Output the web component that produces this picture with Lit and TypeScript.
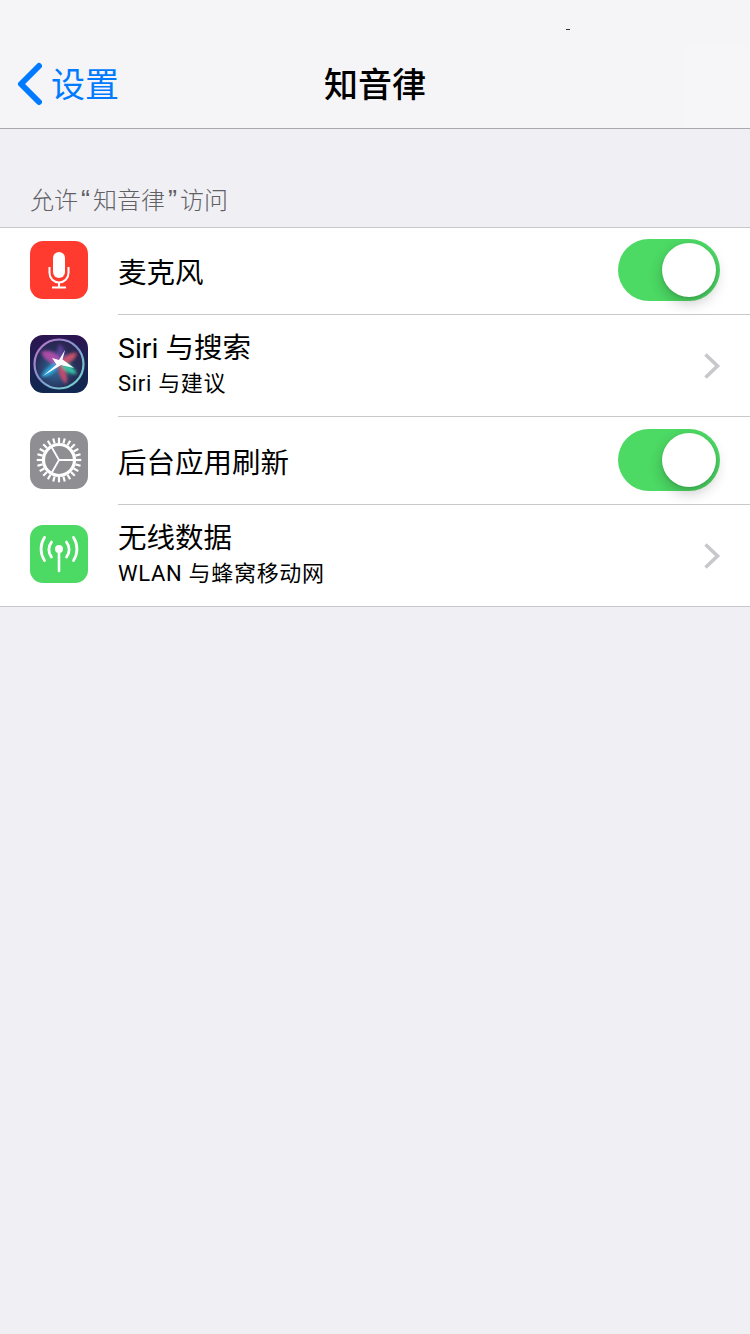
import { LitElement, html, css, svg } from "lit";
import { customElement } from "lit/decorators.js";

const micIcon = html`<svg viewBox="0 0 58 58" width="58" height="58"><rect width="58" height="58" rx="13" fill="#ff3b30"/>
<rect x="23" y="11" width="12" height="26" rx="6" fill="#fff"/>
<path d="M19.5 26v6a9.5 9.5 0 0 0 19 0v-6" fill="none" stroke="#fff" stroke-width="2"/>
<path d="M29 41.5v5M22 46.5h14" fill="none" stroke="#fff" stroke-width="2"/></svg>`;

const siriIcon = html`<svg viewBox="0 0 58 58" width="58" height="58"><defs>
<linearGradient id="sb" x1="0" y1="0" x2="0" y2="1"><stop offset="0" stop-color="#2c1450"/><stop offset=".5" stop-color="#1c2152"/><stop offset="1" stop-color="#10284f"/></linearGradient>
<radialGradient id="so" cx=".42" cy=".62" r=".62"><stop offset="0" stop-color="#2f6e9c"/><stop offset=".65" stop-color="#27305a"/><stop offset="1" stop-color="#2b2350"/></radialGradient>
<linearGradient id="sr" x1="0" y1="0" x2="1" y2="1"><stop offset="0" stop-color="#c070c8"/><stop offset=".5" stop-color="#7f9ad0"/><stop offset="1" stop-color="#70e0c8"/></linearGradient>
<filter id="bl" x="-30%" y="-30%" width="160%" height="160%"><feGaussianBlur stdDeviation="1.5"/></filter><filter id="bl2" x="-30%" y="-30%" width="160%" height="160%"><feGaussianBlur stdDeviation=".5"/></filter></defs>
<rect width="58" height="58" rx="13" fill="url(#sb)"/>
<circle cx="29" cy="29" r="24.5" fill="url(#so)" stroke="url(#sr)" stroke-width="2.2"/>
<g filter="url(#bl)">
<path d="M11 17C20 13 31 19 31 29 24 31 14 26 11 17Z" fill="#c04fb0" opacity=".85"/>
<path d="M30 9C36 15 37 22 31 28 26 23 25 15 30 9Z" fill="#8a4fd0" opacity=".5"/>
<path d="M47 18C41 17 33 21 30 28 37 31 45 26 47 18Z" fill="#e05a70" opacity=".85"/>
<path d="M29 28C35 33 39 41 36 49 30 44 27 36 29 28Z" fill="#d04a6c" opacity=".9"/>
<path d="M29 27C22 28 14 34 11 42 19 43 27 37 29 27Z" fill="#30b0e8" opacity=".85"/>
<path d="M30 27C38 27 44 32 47 39 40 40 32 35 30 27Z" fill="#34d0a8" opacity=".9"/>
</g>
<g filter="url(#bl2)" fill="#fff">
<path d="M35 15L32.5 24.5 44 33 31 30 13 41 26.5 29.5 22 23 29 25Z"/>
</g>
</svg>`;

const teeth = Array.from({ length: 24 }, (_, i) => {
  const a = (i * 15 * Math.PI) / 180;
  return svg`<line x1=${(29 + Math.cos(a) * 17).toFixed(2)} y1=${(29 + Math.sin(a) * 17).toFixed(2)} x2=${(29 + Math.cos(a) * 22.3).toFixed(2)} y2=${(29 + Math.sin(a) * 22.3).toFixed(2)} stroke="#fff" stroke-width="2.2"/>`;
});
const gearIcon = html`<svg viewBox="0 0 58 58" width="58" height="58"><rect width="58" height="58" rx="13" fill="#8e8e93"/>
${teeth}
<circle cx="29" cy="29" r="15.5" fill="none" stroke="#fff" stroke-width="3.2"/>
<path d="M29 29L45 29M29 29L21 15M29 29L21 43" fill="none" stroke="#fff" stroke-width="1.8"/></svg>`;

const wifiIcon = html`<svg viewBox="0 0 58 58" width="58" height="58"><rect width="58" height="58" rx="13" fill="#4cd964"/>
<circle cx="29" cy="24" r="4" fill="#fff"/>
<path d="M29 24V46" stroke="#fff" stroke-width="2.6" stroke-linecap="round"/>
<g fill="none" stroke="#fff" stroke-width="2.8" stroke-linecap="round">
<path d="M21.5 17a12 12 0 0 0 0 15"/><path d="M36.5 17a12 12 0 0 1 0 15"/>
<path d="M14.5 12.5a21 21 0 0 0 0 23"/><path d="M43.5 12.5a21 21 0 0 1 0 23"/></g></svg>`;

const chevron = html`<svg class="chev" viewBox="0 0 18 28" width="18" height="28"><path d="M2.5 2.5L14.5 14 2.5 25.5" fill="none" stroke="#c7c7cc" stroke-width="3.6"/></svg>`;
const toggle = html`<div class="toggle"><div class="knob"></div></div>`;

@customElement("app-root")
export class AppRoot extends LitElement {
  static styles = css`
    :host { display: block; width: 750px; height: 1334px; background: #efeff4; overflow: hidden; position: relative;
      font-family: "Roboto", "Noto Sans CJK SC", sans-serif; color: #000; }
    .nav { height: 128px; box-sizing: content-box; background: #f5f5f8; border-bottom: 1px solid #a9a9ad; display: flex; align-items: flex-end; position: relative; }
    .navin { height: 88px; flex: 1; display: grid; grid-template-columns: 1fr auto 1fr; align-items: center; }
    .back { display: flex; align-items: center; color: #007aff; font-size: 34px; gap: 7px; padding-left: 16px; }
    .back svg { display: block; }
    .back span, .title { padding-bottom: 4px; }
    .title { font-size: 34px; font-weight: 500; }
    .glare { position: absolute; left: 685px; top: 46px; right: 0; bottom: 0; background: rgba(255,255,255,.16); }
    .speck { position: absolute; top: 29px; left: 566px; width: 4px; height: 1px; background: #333; }
    .label { height: 98px; box-sizing: border-box; padding: 52px 0 0 30px; font-size: 24px; line-height: 36px; color: #5f5f64; font-weight: 300; font-family: "Noto Sans CJK SC", sans-serif; }
    .q { display: inline-block; width: 15px; font-family: "Liberation Sans", sans-serif; font-size: 27px; line-height: 1; text-align: center; }
    .list { background: #fff; border-top: 1px solid #c8c7cc; border-bottom: 1px solid #c8c7cc; }
    .row { display: flex; align-items: center; padding: 0 30px; position: relative; box-sizing: border-box; }
    .row + .row::before { content: ""; position: absolute; top: -1px; left: 118px; right: 0; height: 1px; background: #c8c7cc; }
    .r1 { height: 87px; } .r2 { height: 102px; } .r3 { height: 88px; } .r4 { height: 101px; }
    .ic { width: 58px; height: 58px; margin-right: 30px; margin-top: -3px; flex: none; display: block; }
    .r2 .ic { margin-top: -4px; }
    .ic svg { display: block; }
    .text { flex: 1; min-width: 0; }
    .r1 .text { margin-top: 4px; } .r3 .text { margin-top: 6px; } .r2 .text { margin-top: -3px; } .r4 .text { margin-top: -2px; }
    .t { font-size: 28.5px; line-height: 38px; }
    .s { font-size: 22px; letter-spacing: .7px; line-height: 32px; }
    .toggle { width: 102px; height: 62px; border-radius: 31px; background: #4cd964; position: relative; margin-top: -3px; }
    .knob { position: absolute; top: 4px; right: 4px; width: 54px; height: 54px; border-radius: 50%; background: #fff; box-shadow: 0 6px 14px rgba(0,0,0,.22), 0 1px 3px rgba(0,0,0,.12); }
    .chev { display: block; margin-right: -1px; }
  `;
  render() {
    return html`
      <div class="nav">
        <div class="navin">
          <div class="back"><svg viewBox="0 0 28 44" width="28" height="44"><path d="M23 4L5 22 23 40" fill="none" stroke="#007aff" stroke-width="6" stroke-linecap="round" stroke-linejoin="round"/></svg><span>设置</span></div>
          <div class="title">知音律</div><div></div>
        </div>
        <div class="glare"></div><div class="speck"></div>
      </div>
      <div class="label">允许<span class="q">“</span>知音律<span class="q">”</span>访问</div>
      <div class="list">
        <div class="row r1"><div class="ic">${micIcon}</div><div class="text"><div class="t">麦克风</div></div>${toggle}</div>
        <div class="row r2"><div class="ic">${siriIcon}</div><div class="text"><div class="t">Siri 与搜索</div><div class="s">Siri 与建议</div></div>${chevron}</div>
        <div class="row r3"><div class="ic">${gearIcon}</div><div class="text"><div class="t">后台应用刷新</div></div>${toggle}</div>
        <div class="row r4"><div class="ic">${wifiIcon}</div><div class="text"><div class="t">无线数据</div><div class="s">WLAN 与蜂窝移动网</div></div>${chevron}</div>
      </div>`;
  }
}
